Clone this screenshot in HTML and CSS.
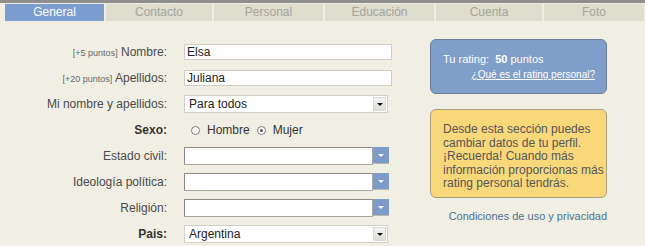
FILE: index.html
```html
<!DOCTYPE html>
<html lang="es">
<head>
    <meta charset="utf-8">
    <title>Perfil - General</title>
    <link rel="stylesheet" href="styles.css">
</head>
<body>
    <div class="topline"></div>
    <ul class="tabs">
        <li class="tab active">General</li>
        <li class="tab">Contacto</li>
        <li class="tab">Personal</li>
        <li class="tab">Educación</li>
        <li class="tab">Cuenta</li>
        <li class="tab">Foto</li>
    </ul>
    <div class="content">
        <div class="form">
            <div class="row">
                <label class="label"><small>[+5 puntos]</small> Nombre:</label>
                <div class="field text">Elsa</div>
            </div>
            <div class="row">
                <label class="label"><small>[+20 puntos]</small> Apellidos:</label>
                <div class="field text">Juliana</div>
            </div>
            <div class="row">
                <label class="label">Mi nombre y apellidos:</label>
                <div class="field combo">
                    <span class="value">Para todos</span>
                    <span class="btn gray"><i class="arrow dark"></i></span>
                </div>
            </div>
            <div class="row">
                <label class="label strong">Sexo:</label>
                <div class="radios">
                    <span class="radio"></span><span class="opt">Hombre</span>
                    <span class="radio checked"></span><span class="opt">Mujer</span>
                </div>
            </div>
            <div class="row">
                <label class="label">Estado civil:</label>
                <div class="field blue-combo">
                    <span class="box"></span>
                    <span class="btn blue"><i class="arrow light"></i></span>
                </div>
            </div>
            <div class="row">
                <label class="label">Ideología política:</label>
                <div class="field blue-combo">
                    <span class="box"></span>
                    <span class="btn blue"><i class="arrow light"></i></span>
                </div>
            </div>
            <div class="row">
                <label class="label">Religión:</label>
                <div class="field blue-combo">
                    <span class="box"></span>
                    <span class="btn blue"><i class="arrow light"></i></span>
                </div>
            </div>
            <div class="row">
                <label class="label strong">Pais:</label>
                <div class="field combo">
                    <span class="value">Argentina</span>
                    <span class="btn gray"><i class="arrow dark"></i></span>
                </div>
            </div>
        </div>
        <div class="side">
            <div class="rating">
                <p>Tu rating:&nbsp; <b>50</b> puntos</p>
                <a href="#">¿Qué es el rating personal?</a>
            </div>
            <div class="note">
                Desde esta sección puedes cambiar datos de tu perfil. ¡Recuerda! Cuando más información proporcionas más rating personal tendrás.
            </div>
            <a class="terms" href="#">Condiciones de uso y privacidad</a>
        </div>
    </div>
</body>
</html>
```

FILE: styles.css
```css
body {
    margin: 0;
    background: #f1efe4;
    font-family: 'Liberation Sans', Arial, sans-serif;
    font-size: 12px;
    color: #444444;
}

.topline {
    height: 3px;
    background: #8e8e8c;
}

.tabs {
    display: flex;
    gap: 2px;
    list-style: none;
    margin: 1px 0 0 5px;
    padding: 0;
}

.tab {
    width: 100px;
    flex: 0 0 auto;
    height: 17px;
    line-height: 17px;
    text-align: center;
    background: #dfddce;
    color: #a4a49a;
}

.tab:nth-child(2) { width: 106px; }
.tab:nth-child(3) { width: 109px; }
.tab:nth-child(4) { width: 109px; }
.tab:nth-child(5) { width: 106px; }
.tab:nth-child(6) { width: 100px; }

.tab.active {
    width: 99px;
    background: #7b9dcf;
    color: #ffffff;
}

.content {
    display: flex;
    padding-top: 18px;
}

.form {
    width: 430px;
}

.row {
    display: flex;
    align-items: center;
    height: 26px;
}

.label {
    width: 167px;
    margin-right: 17px;
    text-align: right;
    color: #4a4a4a;
}

.label small {
    font-size: 9px;
    color: #666666;
}

.label.strong {
    font-weight: bold;
    color: #333333;
}

.field {
    box-sizing: border-box;
    display: flex;
}

.text {
    width: 208px;
    height: 16px;
    line-height: 14px;
    padding-left: 2px;
    background: #ffffff;
    border: 1px solid #cfcdc4;
    color: #222222;
}

.combo {
    width: 204px;
    height: 18px;
    align-items: center;
    background: #ffffff;
    border: 1px solid #d2d0c6;
    color: #222222;
}

.combo .value {
    flex: 1;
    padding-left: 4px;
}

.btn {
    display: flex;
    align-items: center;
    justify-content: center;
}

.btn.gray {
    width: 13px;
    height: 14px;
    margin-right: 1px;
    background: linear-gradient(#f4f4f2, #dcdcd8);
    border: 1px solid #d8d8d4;
    box-sizing: border-box;
}

.arrow {
    width: 0;
    height: 0;
    border-left: 3px solid transparent;
    border-right: 3px solid transparent;
}

.arrow.dark {
    border-top: 3px solid #111111;
}

.arrow.light {
    border-top: 3px solid #ffffff;
}

.blue-combo {
    width: 205px;
    height: 18px;
}

.blue-combo .box {
    box-sizing: border-box;
    width: 189px;
    height: 18px;
    background: #ffffff;
    border: 1px solid #a8a6a0;
    border-top-color: #8d8b86;
    border-left-color: #8d8b86;
}

.btn.blue {
    width: 16px;
    height: 17px;
    background: #7d9bc9;
    border-bottom: 1px solid #b9b7ad;
    box-sizing: border-box;
}

.radios {
    display: flex;
    align-items: center;
    padding-left: 7px;
    color: #333333;
}

.radio {
    box-sizing: border-box;
    width: 9px;
    height: 9px;
    border: 1px solid #777777;
    border-radius: 50%;
    background: #ffffff;
    margin-right: 7px;
    display: flex;
    align-items: center;
    justify-content: center;
}

.radio.checked::after {
    content: "";
    width: 3px;
    height: 3px;
    border-radius: 50%;
    background: #555555;
}

.opt {
    margin-right: 7px;
}

.side {
    width: 177px;
    display: flex;
    flex-direction: column;
}

.rating {
    box-sizing: border-box;
    height: 55px;
    padding: 13px 11px 0 12px;
    background: #7f9ec9;
    border: 1px solid #6b7e98;
    border-radius: 6px;
    color: #ffffff;
    font-size: 11px;
}

.rating p {
    margin: 0 0 4px;
}

.rating a {
    display: block;
    text-align: right;
    color: #ffffff;
    font-size: 10px;
}

.note {
    box-sizing: border-box;
    height: 89px;
    margin-top: 15px;
    padding: 13px 2px 0 12px;
    background: #f9d87c;
    border: 1px solid #a79e78;
    border-radius: 6px;
    color: #555555;
    line-height: 13.5px;
}

.terms {
    margin-top: 12px;
    text-align: right;
    font-size: 11px;
    color: #4a6f90;
    text-decoration: none;
}
```
